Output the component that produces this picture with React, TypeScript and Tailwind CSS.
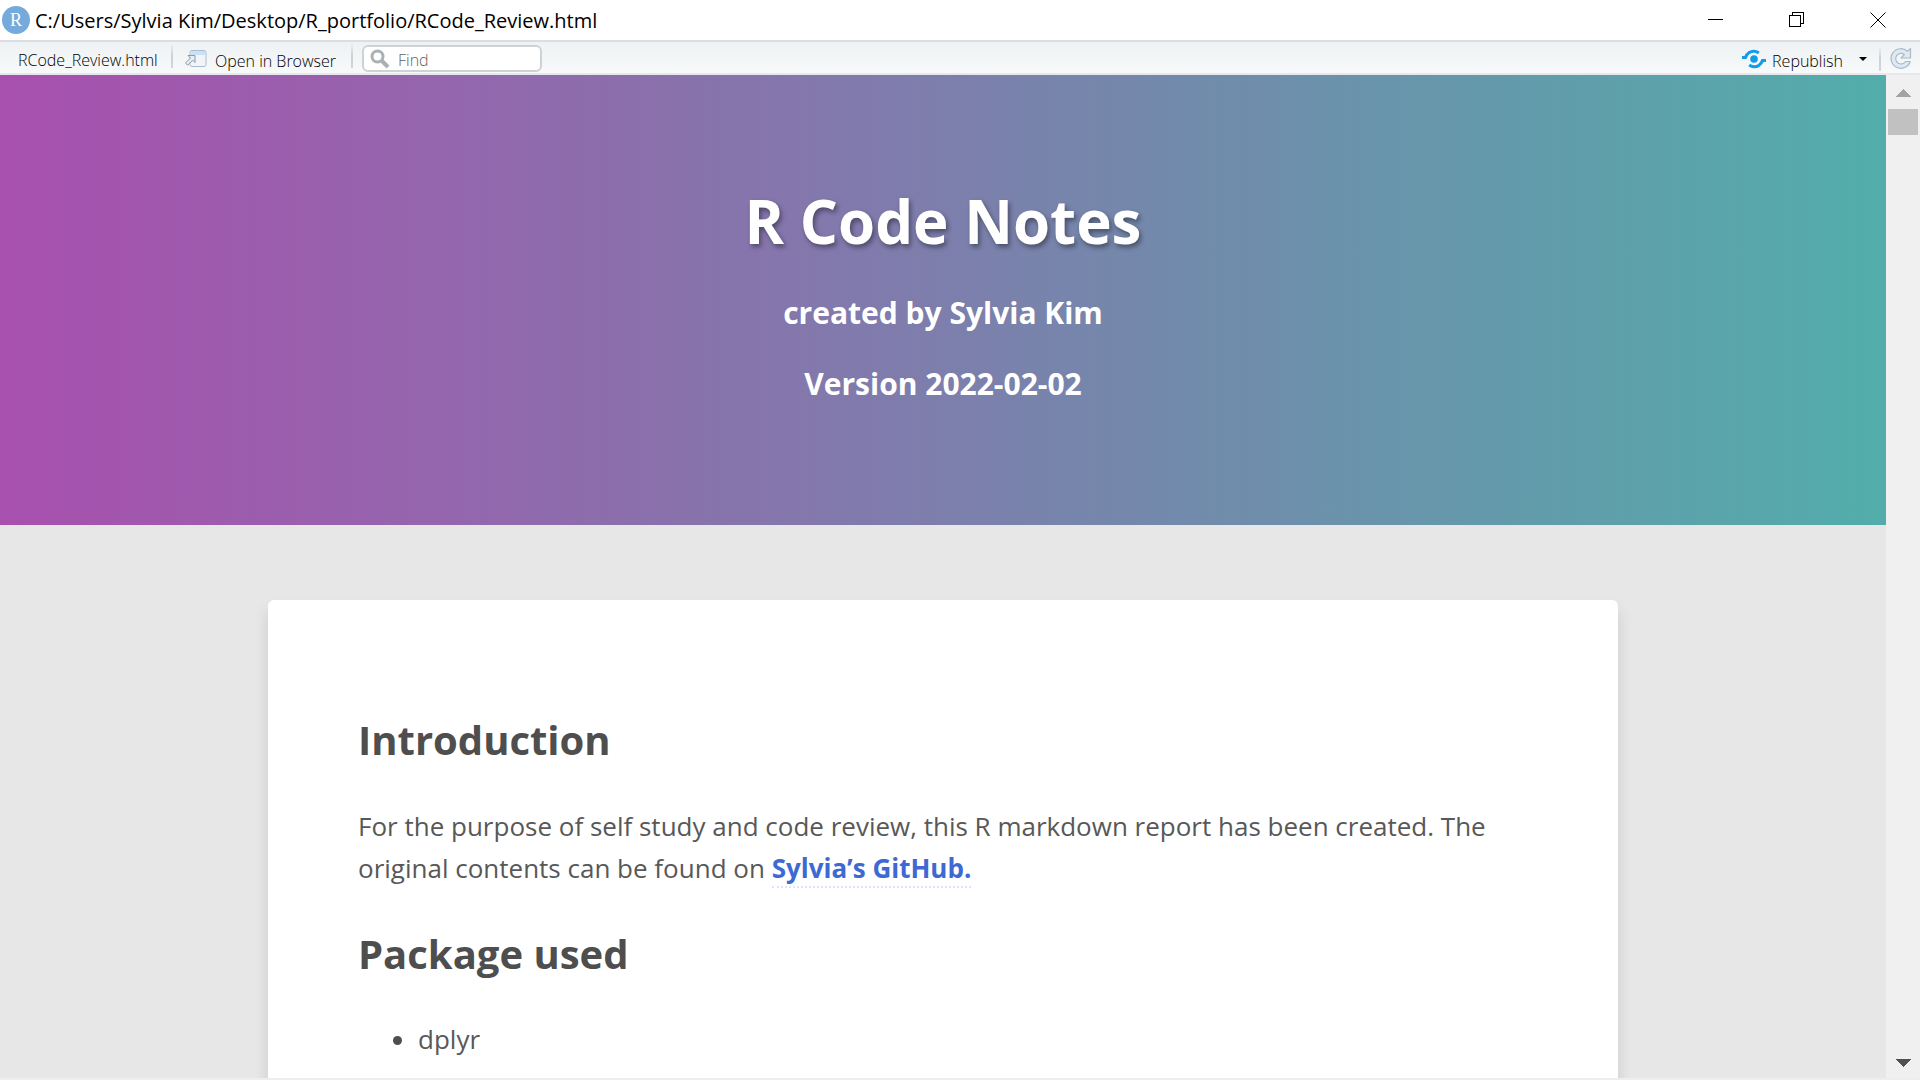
import { useId } from "react";

function RLogo() {
  return (
    <svg viewBox="0 0 28 28" className="size-7 shrink-0" aria-hidden="true">
      <circle cx="14" cy="14" r="14" fill="#75aadb" />
      <text x="14" y="20" textAnchor="middle" fontFamily='"Liberation Serif", serif' fontSize="18" fill="#fff">
        R
      </text>
    </svg>
  );
}

function TitleBar() {
  const control = "flex h-10 w-[81px] items-center justify-center";
  return (
    <header className="flex h-10 shrink-0 items-center bg-white pr-[2px] pl-0.5 text-black">
      <RLogo />
      <span className="ml-[5px] pt-0.5 whitespace-nowrap text-xl">C:/Users/Sylvia Kim/Desktop/R_portfolio/RCode_Review.html</span>
      <div className="ml-auto flex">
        <button type="button" aria-label="Minimize" className={control}>
          <svg viewBox="0 0 16 16" className="size-4" fill="none" stroke="#000" shapeRendering="crispEdges">
            <path d="M0 7.5h15" />
          </svg>
        </button>
        <button type="button" aria-label="Restore" className={control}>
          <svg viewBox="0 0 16 16" className="size-4" fill="none" stroke="#000" shapeRendering="crispEdges">
            <path d="M.5 3.5h11v11H.5zM3.500 3V.5h11v11H12" />
          </svg>
        </button>
        <button type="button" aria-label="Close" className={control}>
          <svg viewBox="0 0 16 16" className="size-4" fill="none" stroke="#000">
            <path d="M.5 .5l15 15M15.500 .5l-15 15" />
          </svg>
        </button>
      </div>
    </header>
  );
}

function Divider() {
  return <div className="h-6 w-0.5 shrink-0 self-start bg-linear-to-b from-[#eceef0] via-[#cdd0d3] to-[#d4d7d9]" />;
}

function Toolbar() {
  const findId = useId();
  return (
    <nav className="flex h-[35px] shrink-0 items-center border-y-2 border-t-[#dcdce1] border-b-[#e6e8eb] bg-linear-to-b from-[#eff2f4] to-[#f7f9fa] pt-0.5 text-base font-light text-black">
      <span className="w-[171px] pt-0.5 pl-[18px] whitespace-nowrap">RCode_Review.html</span>
      <Divider />
      <button type="button" className="flex h-6 w-[178px] items-center gap-2 pl-3 whitespace-nowrap">
        <svg viewBox="0 0 22 20" className="h-5 w-[22px]" aria-hidden="true">
          <rect x="5" y="1.500" width="16" height="16" rx="2" fill="#f1f5fa" stroke="#a9bccb" />
          <path d="M5.500 6V3.500a1.500 1.500 0 0 1 1.500-1.500h12a1.500 1.500 0 0 1 1.500 1.500V6z" fill="#c6e1f8" />
          <path d="M3 6.500h7v7l-2.300-2.300-5 5-2.200-2.200 5-5z" fill="#e9edf1" stroke="#8d9aa5" />
        </svg>
        <span className="pt-1">Open in Browser</span>
      </button>
      <Divider />
      <label
        htmlFor={findId}
        className="ml-[9px] flex h-[27px] w-[180px] items-center gap-2 rounded-md border-2 border-[#cdd3d5] bg-white pl-1.5"
      >
        <svg viewBox="0 0 20 20" className="size-5 shrink-0" fill="none" stroke="#a8b1b3">
          <circle cx="7.500" cy="7.500" r="5.500" strokeWidth="3" />
          <path d="M12 12l6 6" strokeWidth="4" />
        </svg>
        <input
          id={findId}
          type="text"
          placeholder="Find"
          aria-label="Find"
          className="w-full min-w-0 bg-transparent pt-0.5 outline-none placeholder:text-[#5f5f5f]"
        />
      </label>
      <div className="ml-auto flex items-center">
        <button type="button" className="flex h-6 items-center gap-1.5 whitespace-nowrap">
          <svg viewBox="0 0 24 20" className="h-5 w-6" fill="none" stroke="#0f9cea" strokeWidth="3" aria-hidden="true">
            <circle cx="12" cy="10" r="3.800" fill="#0f9cea" stroke="none" />
            <path d="M0 8.500h3.500C5 4 9 1.800 12.500 2.300c1.800.2 3.200.8 4.300 1.700" />
            <path d="M24 11.500h-3.500C19 16 15 18.200 11.500 17.700c-1.800-.2-3.200-.8-4.300-1.700" />
          </svg>
          <span className="pt-1">Republish</span>
        </button>
        <button type="button" aria-label="Publish options" className="ml-3 flex h-6 w-4 items-center justify-center">
          <svg viewBox="0 0 8 4" className="h-1 w-2">
            <path d="M0 0h8L4 4z" fill="#000" />
          </svg>
        </button>
        <div className="w-2" />
        <Divider />
        <button type="button" aria-label="Refresh" className="ml-2 flex h-6 w-[31px] items-center">
          <svg viewBox="0 0 24 24" className="size-6" fill="#dfe9f6" stroke="#abb8c6" strokeWidth="1.200" strokeLinejoin="round">
            <path d="M21.500 1.500v9.500h-9.500l3.400-3.400A5.300 5.300 0 1 0 16.500 14.500h4.700A9.800 9.800 0 1 1 18.600 4.400z" />
          </svg>
        </button>
      </div>
    </nav>
  );
}

function Scrollbar() {
  return (
    <div className="flex w-[34px] shrink-0 flex-col items-center bg-[#f0f0f0]" aria-hidden="true">
      <div className="flex h-[34px] items-center pt-0.5">
        <svg viewBox="0 0 16 8" className="h-2 w-4" shapeRendering="crispEdges">
          <path d="M0 8L8 0l8 8z" fill="#a3a3a3" />
        </svg>
      </div>
      <div className="h-[26px] w-[30px] bg-[#c1c1c1]" />
      <div className="mt-auto flex h-[30px] items-center">
        <svg viewBox="0 0 16 8" className="h-2 w-4" shapeRendering="crispEdges">
          <path d="M0 0h16L8 8z" fill="#505050" />
        </svg>
      </div>
    </div>
  );
}

export default function App() {
  return (
    <div className="flex h-screen flex-col overflow-hidden bg-white font-['Open_Sans',sans-serif]">
      <TitleBar />
      <Toolbar />
      <div className="flex min-h-0 flex-1 border-b-2 border-[#eeeeee]">
        <main className="min-w-0 flex-1 overflow-hidden bg-[#e7e7e7]">
          <section className="flex h-[450px] flex-col items-center bg-linear-to-r/srgb from-[#a850ae] to-[#52adaa] pt-[101px] text-center font-bold text-white">
            <h1 className="text-[60px] leading-[90px] text-shadow-[2px_3px_5px_rgba(0,0,0,0.4)]">R Code Notes</h1>
            <h2 className="mt-6 text-3xl leading-[45px]">created by Sylvia Kim</h2>
            <h2 className="mt-[26px] text-3xl leading-[45px]">Version 2022-02-02</h2>
          </section>
          <article className="mx-auto mt-[75px] max-w-[1350px] rounded-md bg-white px-[90px] pt-[110px] pb-24 text-[26px] leading-[42px] text-[#585858] shadow-[0_10px_15px_rgba(0,0,0,0.12)]">
            <h2 className="text-[40px] leading-[60px] font-bold text-[#4e4e4e]">Introduction</h2>
            <p className="mt-[35px]">
              For the purpose of self study and code review, this R markdown report has been created. The original contents can be found on{" "}
              <a href="#github" className="border-b-2 border-dotted border-[#dfe5f8] font-bold text-[#3e69d2]">
                Sylvia’s GitHub.
              </a>
            </p>
            <h2 className="mt-[35px] text-[40px] leading-[60px] font-bold text-[#4e4e4e]">Package used</h2>
            <ul className="mt-[34px] list-disc pl-[60px] marker:text-[#4e4e4e]">
              <li>dplyr</li>
            </ul>
          </article>
        </main>
        <Scrollbar />
      </div>
    </div>
  );
}
